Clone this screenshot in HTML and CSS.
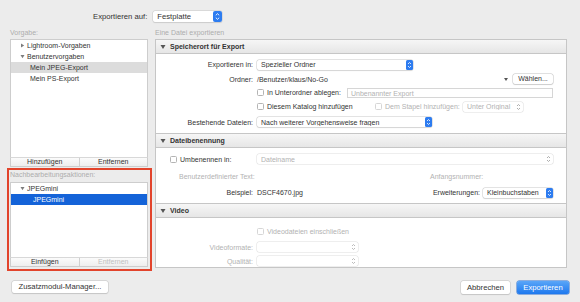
FILE: index.html
```html
<!DOCTYPE html>
<html lang="de">

<head>
    <meta charset="UTF-8">
    <meta name="viewport" content="width=device-width, initial-scale=1.0">
    <title>Exportieren</title>
    <link rel="stylesheet" href="styles.css">
</head>

<body>
    <div class="dialog">
        <!-- Ziel -->
        <div class="topbar">
            <span class="top-label">Exportieren auf:</span>
            <div class="popup popup-top">
                <span class="popup-text">Festplatte</span>
                <span class="stepper">
                    <svg width="9" height="11" viewBox="0 0 9 11"><rect width="9" height="11" rx="2" fill="#2d7cf0"/><path d="M2.8 4.3l1.7-1.6 1.7 1.6M2.8 6.7l1.7 1.6 1.7-1.6" stroke="#fff" stroke-width="0.9" fill="none"/></svg>
                </span>
            </div>
        </div>

        <div class="main">
            <!-- Vorgaben -->
            <div class="left">
                <div class="group-label">Vorgabe:</div>
                <div class="list presets">
                    <div class="row"><svg class="tri" width="5" height="5" viewBox="0 0 5 5"><path d="M1 0.5L4.2 2.5 1 4.5z" fill="#7c7c7c"/></svg>Lightroom-Vorgaben</div>
                    <div class="row"><svg class="tri" width="5" height="5" viewBox="0 0 5 5"><path d="M0.5 1L4.5 1 2.5 4.2z" fill="#7c7c7c"/></svg>Benutzervorgaben</div>
                    <div class="row sub selected-grey">Mein JPEG-Export</div>
                    <div class="row sub">Mein PS-Export</div>
                </div>
                <div class="list-buttons">
                    <button class="lbtn">Hinzufügen</button>
                    <button class="lbtn">Entfernen</button>
                </div>

                <div class="post">
                    <div class="group-label">Nachbearbeitungsaktionen:</div>
                    <div class="list actions">
                        <div class="row"><svg class="tri" width="5" height="5" viewBox="0 0 5 5"><path d="M0.5 1L4.5 1 2.5 4.2z" fill="#7c7c7c"/></svg>JPEGmini</div>
                        <div class="row sub2 selected-blue">JPEGmini</div>
                    </div>
                    <div class="list-buttons">
                        <button class="lbtn">Einfügen</button>
                        <button class="lbtn disabled">Entfernen</button>
                    </div>
                </div>
            </div>

            <!-- Einstellungen -->
            <div class="right">
                <div class="group-label">Eine Datei exportieren</div>
                <div class="panel">
                    <div class="section-head"><svg class="head-tri" width="6" height="6" viewBox="0 0 6 6"><path d="M0.5 1L5.5 1 3 5z" fill="#555"/></svg>Speicherort für Export</div>
                    <div class="section-body body-location">
                        <div class="label">Exportieren in:</div>
                        <div class="value">
                            <div class="popup w-ordner">
                                <span class="popup-text">Spezieller Ordner</span>
                                <span class="stepper"><svg width="7" height="10" viewBox="0 0 7 10"><rect width="7" height="10" rx="1.5" fill="#2d7cf0"/><path d="M2 4l1.5-1.5L5 4M2 6l1.5 1.5L5 6" stroke="#fff" stroke-width="0.8" fill="none"/></svg></span>
                            </div>
                        </div>

                        <div class="label">Ordner:</div>
                        <div class="value">
                            <span>/Benutzer/klaus/No-Go</span>
                            <span class="spacer"></span>
                            <svg class="small-arrow" width="4" height="3" viewBox="0 0 4 3"><path d="M0 0L4 0 2 3z" fill="#555"/></svg>
                            <button class="btn btn-choose">Wählen...</button>
                        </div>

                        <div class="label"></div>
                        <div class="value">
                            <span class="check"></span>
                            <span class="check-text">In Unterordner ablegen:</span>
                            <div class="textfield">Unbenannter Export</div>
                        </div>

                        <div class="label"></div>
                        <div class="value">
                            <span class="check"></span>
                            <span class="check-text w-katalog">Diesem Katalog hinzufügen</span>
                            <span class="check off"></span>
                            <span class="check-text muted w-stapel-text">Dem Stapel hinzufügen:</span>
                            <div class="popup popup-off w-stapel">
                                <span class="popup-text">Unter Original</span>
                                <span class="chev"><svg width="5" height="8" viewBox="0 0 5 8"><path d="M1 3l1.5-1.5L4 3M1 5l1.5 1.5L4 5" stroke="#999" stroke-width="0.8" fill="none"/></svg></span>
                            </div>
                        </div>

                        <div class="label">Bestehende Dateien:</div>
                        <div class="value">
                            <div class="popup w-bestehend">
                                <span class="popup-text">Nach weiterer Vorgehensweise fragen</span>
                                <span class="stepper"><svg width="7" height="10" viewBox="0 0 7 10"><rect width="7" height="10" rx="1.5" fill="#2d7cf0"/><path d="M2 4l1.5-1.5L5 4M2 6l1.5 1.5L5 6" stroke="#fff" stroke-width="0.8" fill="none"/></svg></span>
                            </div>
                        </div>
                    </div>

                    <div class="section-head"><svg class="head-tri" width="6" height="6" viewBox="0 0 6 6"><path d="M0.5 1L5.5 1 3 5z" fill="#555"/></svg>Dateibenennung</div>
                    <div class="section-body body-naming">
                        <div class="label left-label">
                            <span class="check"></span>
                            <span class="check-text">Umbenennen in:</span>
                        </div>
                        <div class="value">
                            <div class="popup popup-off grow">
                                <span class="popup-text">Dateiname</span>
                                <span class="chev"><svg width="5" height="8" viewBox="0 0 5 8"><path d="M1 3l1.5-1.5L4 3M1 5l1.5 1.5L4 5" stroke="#999" stroke-width="0.8" fill="none"/></svg></span>
                            </div>
                        </div>

                        <div class="label left-label indent muted">Benutzerdefinierter Text:</div>
                        <div class="value">
                            <span class="muted start-number">Anfangsnummer:</span>
                        </div>

                        <div class="label">Beispiel:</div>
                        <div class="value">
                            <span>DSCF4670.jpg</span>
                            <span class="spacer"></span>
                            <span>Erweiterungen:</span>
                            <div class="popup w-ext">
                                <span class="popup-text">Kleinbuchstaben</span>
                                <span class="stepper"><svg width="7" height="10" viewBox="0 0 7 10"><rect width="7" height="10" rx="1.5" fill="#2d7cf0"/><path d="M2 4l1.5-1.5L5 4M2 6l1.5 1.5L5 6" stroke="#fff" stroke-width="0.8" fill="none"/></svg></span>
                            </div>
                        </div>
                    </div>

                    <div class="section-head"><svg class="head-tri" width="6" height="6" viewBox="0 0 6 6"><path d="M0.5 1L5.5 1 3 5z" fill="#555"/></svg>Video</div>
                    <div class="section-body body-video">
                        <div class="label"></div>
                        <div class="value">
                            <span class="check off"></span>
                            <span class="check-text muted">Videodateien einschließen</span>
                        </div>

                        <div class="label muted">Videoformate:</div>
                        <div class="value">
                            <div class="popup popup-off w-video">
                                <span class="popup-text"></span>
                                <span class="chev"><svg width="5" height="8" viewBox="0 0 5 8"><path d="M1 3l1.5-1.5L4 3M1 5l1.5 1.5L4 5" stroke="#aaa" stroke-width="0.8" fill="none"/></svg></span>
                            </div>
                        </div>

                        <div class="label muted">Qualität:</div>
                        <div class="value">
                            <div class="popup popup-off w-video">
                                <span class="popup-text"></span>
                                <span class="chev"><svg width="5" height="8" viewBox="0 0 5 8"><path d="M1 3l1.5-1.5L4 3M1 5l1.5 1.5L4 5" stroke="#aaa" stroke-width="0.8" fill="none"/></svg></span>
                            </div>
                        </div>
                    </div>
                </div>
            </div>
        </div>

        <!-- Schaltflächen -->
        <div class="footer">
            <button class="btn btn-plugins">Zusatzmodul-Manager...</button>
            <span class="spacer"></span>
            <button class="btn btn-cancel">Abbrechen</button>
            <button class="btn btn-export">Exportieren</button>
        </div>
    </div>
</body>

</html>
```

FILE: styles.css
```css
* {
    box-sizing: border-box;
}

body {
    margin: 0;
    background-color: #ececec;
    font-family: 'Liberation Sans', Arial, sans-serif;
    font-size: 7px;
    color: #333;
}

.dialog {
    width: 580px;
    height: 302px;
}

button {
    font-family: inherit;
    font-size: 7px;
    color: #333;
    padding: 0;
    cursor: pointer;
}

.spacer {
    flex: 1;
}

.muted {
    color: #b2b2b2;
}

/* Ziel oben */
.topbar {
    height: 28px;
    display: flex;
    align-items: center;
    padding-left: 93px;
    padding-top: 4px;
}

.top-label {
    font-size: 7.7px;
    margin-right: 6px;
}

.popup {
    display: flex;
    align-items: center;
    height: 10px;
    background-color: white;
    border-radius: 2px;
    box-shadow: 0 0 0 0.5px #c9c9c9, 0 0.5px 1px rgba(0, 0, 0, 0.12);
    padding-left: 4px;
}

.popup-text {
    flex: 1;
    white-space: nowrap;
    overflow: hidden;
}

.popup-top {
    width: 69px;
    height: 11px;
    font-size: 7.7px;
}

.stepper {
    display: flex;
}

.stepper svg {
    display: block;
}

.chev {
    display: flex;
    padding-right: 2px;
}

.popup-off {
    color: #b2b2b2;
    box-shadow: 0 0 0 0.5px #dedede;
}

/* Hauptbereich */
.main {
    display: flex;
    padding-left: 10px;
    gap: 7px;
}

.left {
    width: 138px;
}

.right {
    width: 412px;
}

.group-label {
    height: 11px;
    line-height: 9px;
    color: #adadad;
}

.list {
    background-color: white;
    border: 1px solid #cdcdcd;
    border-bottom: none;
}

.presets {
    height: 118px;
}

.row {
    display: flex;
    align-items: center;
    height: 11px;
    padding-left: 9px;
    white-space: nowrap;
}

.row.sub {
    padding-left: 19px;
}

.row.sub2 {
    padding-left: 22px;
}

.tri {
    display: block;
    margin-right: 2px;
    flex-shrink: 0;
}

.selected-grey {
    background-color: #dcdcdc;
}

.selected-blue {
    background-color: #1463d8;
    color: white;
}

.list-buttons {
    display: flex;
    height: 10px;
    border: 1px solid #cdcdcd;
    border-top: 1px solid #d8d8d8;
    background-color: #f4f4f4;
}

.lbtn {
    flex: 1;
    border: none;
    background: linear-gradient(#fbfbfb, #eeeeee);
    line-height: 8px;
}

.lbtn + .lbtn {
    border-left: 1px solid #d0d0d0;
}

.lbtn.disabled {
    color: #c0c0c0;
}

/* rote Markierung */
.post {
    margin: 1px -4px 0 -3px;
    border: 2px solid #e2442c;
    padding: 0 2px 2px 1px;
}

.post .group-label {
    height: 12px;
    line-height: 10px;
}

.actions {
    height: 75px;
}

/* Einstellungen rechts */
.panel {
    height: 229px;
    border: 1px solid #c6c6c6;
    background-color: white;
}

.section-head {
    display: flex;
    align-items: center;
    height: 14px;
    border-bottom: 1px solid #c6c6c6;
    background: linear-gradient(#f6f6f6, #e6e6e6);
    font-weight: bold;
    padding-left: 4px;
}

.section-head + .section-body + .section-head {
    border-top: 1px solid #c6c6c6;
    height: 15px;
}

.head-tri {
    display: block;
    margin-right: 4px;
}

.section-body {
    display: grid;
    grid-template-columns: 97px 1fr;
    column-gap: 4px;
    padding-right: 13px;
    align-items: center;
}

.body-location {
    height: 79px;
    grid-template-rows: 15px 14px 13px 15px 16px;
    padding-top: 3px;
}

.body-naming {
    height: 55px;
    grid-template-rows: 14px 20px 13px;
    padding-top: 4px;
}

.body-video {
    height: 50px;
    grid-template-rows: 15px 16px 12px;
    padding-top: 6px;
}

.label {
    text-align: right;
    white-space: nowrap;
}

.left-label {
    text-align: left;
    padding-left: 14px;
    display: flex;
    align-items: center;
}

.left-label.indent {
    padding-left: 23px;
}

.value {
    display: flex;
    align-items: center;
    white-space: nowrap;
}

.w-ordner {
    width: 156px;
}

.w-bestehend {
    width: 175px;
}

.w-stapel {
    width: 60px;
}

.w-ext {
    width: 70px;
    margin-left: 3px;
}

.w-video {
    width: 101px;
}

.grow {
    flex: 1;
}

.check {
    display: inline-block;
    width: 7px;
    height: 7px;
    border: 1px solid #b4b4b4;
    border-radius: 1.5px;
    background-color: white;
    margin-right: 3px;
    flex-shrink: 0;
}

.check.off {
    border-color: #d6d6d6;
}

.check-text {
    margin-right: 5px;
}

.w-katalog {
    width: 108px;
    margin-right: 0;
}

.w-stapel-text {
    width: 78px;
    margin-right: 0;
}

.textfield {
    flex: 1;
    height: 10px;
    line-height: 9px;
    border: 1px solid #d6d6d6;
    color: #b2b2b2;
    padding-left: 3px;
    margin-left: 1px;
}

.small-arrow {
    display: block;
    margin-right: 5px;
}

.btn {
    background-color: white;
    border: none;
    border-radius: 2px;
    box-shadow: 0 0 0 0.5px #c4c4c4, 0 0.5px 1px rgba(0, 0, 0, 0.15);
}

.btn-choose {
    width: 40px;
    height: 10px;
    line-height: 10px;
}

.start-number {
    margin-left: 173px;
}

/* Fußzeile */
.footer {
    display: flex;
    align-items: center;
    padding: 8px 11px 0 12px;
}

.btn-plugins {
    width: 96px;
    height: 12px;
    font-size: 7.7px;
}

.btn-cancel {
    width: 49px;
    height: 13px;
    font-size: 7.7px;
    margin-right: 7px;
    margin-top: 2px;
}

.btn-export {
    width: 52px;
    height: 13px;
    font-size: 7.7px;
    margin-top: 2px;
    color: white;
    background: linear-gradient(#5aa6f8, #1e78ee);
    box-shadow: 0 0 0 0.5px #2a6fd0;
}
```
